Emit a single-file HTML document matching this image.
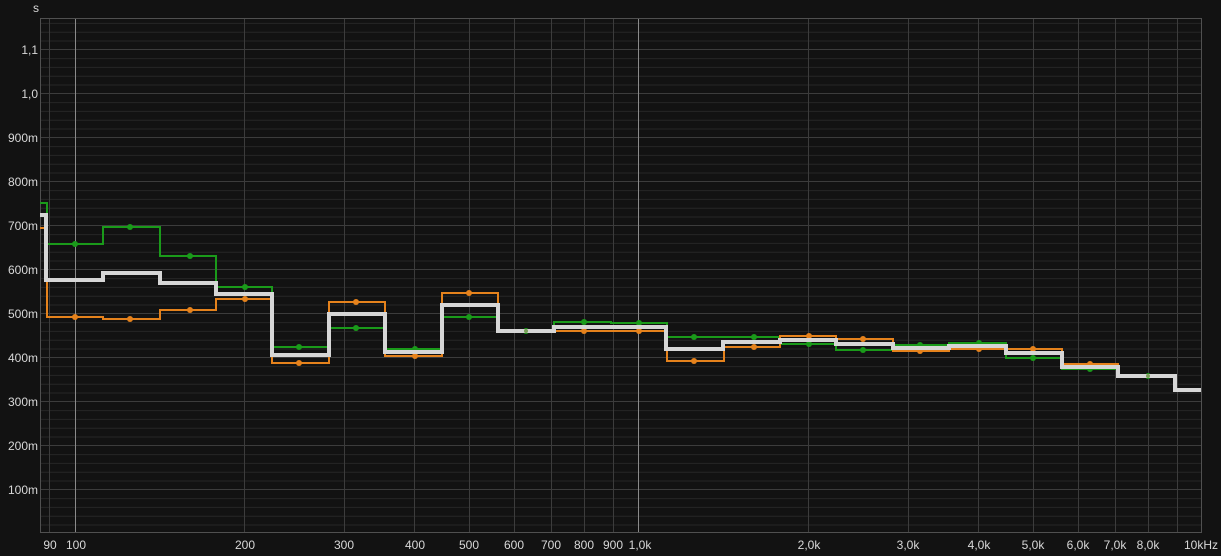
<!DOCTYPE html>
<html><head><meta charset="utf-8"><style>
html,body{margin:0;padding:0;background:#121212;}
svg{display:block}
text{font-family:"Liberation Sans",sans-serif;fill:#d8d8d8;font-size:12px}
</style></head><body>
<svg width="1221" height="556" viewBox="0 0 1221 556">
<rect width="1221" height="556" fill="#121212"/>
<g stroke="#262626" stroke-width="1">
<path d="M40 23.4H1201M40 32.2H1201M40 41H1201M40 58.6H1201M40 67.4H1201M40 76.2H1201M40 85H1201M40 102.6H1201M40 111.4H1201M40 120.2H1201M40 129H1201M40 146.6H1201M40 155.4H1201M40 164.2H1201M40 173H1201M40 190.6H1201M40 199.4H1201M40 208.2H1201M40 217H1201M40 234.6H1201M40 243.4H1201M40 252.2H1201M40 261H1201M40 278.6H1201M40 287.4H1201M40 296.2H1201M40 305H1201M40 322.6H1201M40 331.4H1201M40 340.2H1201M40 349H1201M40 366.6H1201M40 375.4H1201M40 384.2H1201M40 393H1201M40 410.6H1201M40 419.4H1201M40 428.2H1201M40 437H1201M40 454.6H1201M40 463.4H1201M40 472.2H1201M40 481H1201M40 498.6H1201M40 507.4H1201M40 516.2H1201M40 525H1201"/>
</g>
<g stroke="#3c3c3c" stroke-width="1">
<path d="M40 49.5H1201M40 93.5H1201M40 137.5H1201M40 181.5H1201M40 225.5H1201M40 269.5H1201M40 313.5H1201M40 357.5H1201M40 401.5H1201M40 445.5H1201M40 489.5H1201"/>
<path d="M49.5 18V532M244.5 18V532M344.5 18V532M414.5 18V532M469.5 18V532M514.5 18V532M551.5 18V532M584.5 18V532M613.5 18V532M808.5 18V532M908.5 18V532M978.5 18V532M1033.5 18V532M1078.5 18V532M1115.5 18V532M1148.5 18V532M1177.5 18V532"/>
</g>
<g stroke="#8a8a8a" stroke-width="1"><path d="M75.5 18V532M638.5 18V532"/></g>
<path d="M40.5 532V18.5H1201.5V532.5H40" fill="none" stroke="#505050" stroke-width="1"/>
<!-- green -->
<path fill="none" stroke="#1a9a1a" stroke-width="2" d="M40 203H47V244H103V227H160V256H216V287H272V347H329V328H385V349H442V317H498V331H554V322H611V323H667V337H724V337H780V344H836V350H893V345H949V343H1006V358H1062V369H1118V376H1175V390H1201"/>
<!-- orange -->
<path fill="none" stroke="#e5821c" stroke-width="2" d="M40 228H47V317H103V319H160V310H216V299H272V363H329V302H385V356H442V293H498V331H554V331H611V331H667V361H724V347H780V336H836V339H893V351H949V349H1006V349H1062V364H1118V376H1175V390H1201"/>
<g fill="#1a9a1a">
<circle cx="75" cy="244" r="3"/><circle cx="130" cy="227" r="3"/><circle cx="190" cy="256" r="3"/><circle cx="245" cy="287" r="3"/><circle cx="299" cy="347" r="3"/><circle cx="356" cy="328" r="3"/><circle cx="415" cy="349" r="3"/><circle cx="469" cy="317" r="3"/><circle cx="526" cy="331" r="3"/><circle cx="584" cy="322" r="3"/><circle cx="639" cy="323" r="3"/><circle cx="694" cy="337" r="3"/><circle cx="754" cy="337" r="3"/><circle cx="809" cy="344" r="3"/><circle cx="863" cy="350" r="3"/><circle cx="920" cy="345" r="3"/><circle cx="979" cy="343" r="3"/><circle cx="1033" cy="358" r="3"/><circle cx="1090" cy="369" r="3"/><circle cx="1148" cy="376" r="3"/>
</g>
<g fill="#e5821c">
<circle cx="75" cy="317" r="3"/><circle cx="130" cy="319" r="3"/><circle cx="190" cy="310" r="3"/><circle cx="245" cy="299" r="3"/><circle cx="299" cy="363" r="3"/><circle cx="356" cy="302" r="3"/><circle cx="415" cy="356" r="3"/><circle cx="469" cy="293" r="3"/><circle cx="584" cy="331" r="3"/><circle cx="639" cy="331" r="3"/><circle cx="694" cy="361" r="3"/><circle cx="754" cy="347" r="3"/><circle cx="809" cy="336" r="3"/><circle cx="863" cy="339" r="3"/><circle cx="920" cy="351" r="3"/><circle cx="979" cy="349" r="3"/><circle cx="1033" cy="349" r="3"/><circle cx="1090" cy="364" r="3"/>
</g>
<!-- white -->
<path fill="none" stroke="#d6d6d6" stroke-width="4" d="M40 215H46V280H103V273H160V283H216V294H272V355H329V314H385V352H442V305H498V331H554V327H611V327H666V349H723V342H780V340H836V344H893V348H949V346H1006V353H1062V367H1118V376H1175V390H1201"/>
<g fill="#7aa05a"><circle cx="526" cy="331" r="2"/><circle cx="1148" cy="376" r="2"/></g>
<text x="33" y="12" font-size="9">s</text>
<g text-anchor="end">
<text x="38" y="54">1,1</text><text x="38" y="98">1,0</text><text x="38" y="142">900m</text><text x="38" y="186">800m</text><text x="38" y="230">700m</text><text x="38" y="274">600m</text><text x="38" y="318">500m</text><text x="38" y="362">400m</text><text x="38" y="406">300m</text><text x="38" y="450">200m</text><text x="38" y="494">100m</text>
</g>
<g text-anchor="middle">
<text x="50" y="549">90</text><text x="76" y="549">100</text><text x="245" y="549">200</text><text x="344" y="549">300</text><text x="415" y="549">400</text><text x="469" y="549">500</text><text x="514" y="549">600</text><text x="551" y="549">700</text><text x="584" y="549">800</text><text x="613" y="549">900</text><text x="640" y="549">1,0k</text><text x="809" y="549">2,0k</text><text x="908" y="549">3,0k</text><text x="979" y="549">4,0k</text><text x="1033" y="549">5,0k</text><text x="1078" y="549">6,0k</text><text x="1115" y="549">7,0k</text><text x="1148" y="549">8,0k</text><text x="1201" y="549">10kHz</text>
</g>
</svg>
</body></html>
